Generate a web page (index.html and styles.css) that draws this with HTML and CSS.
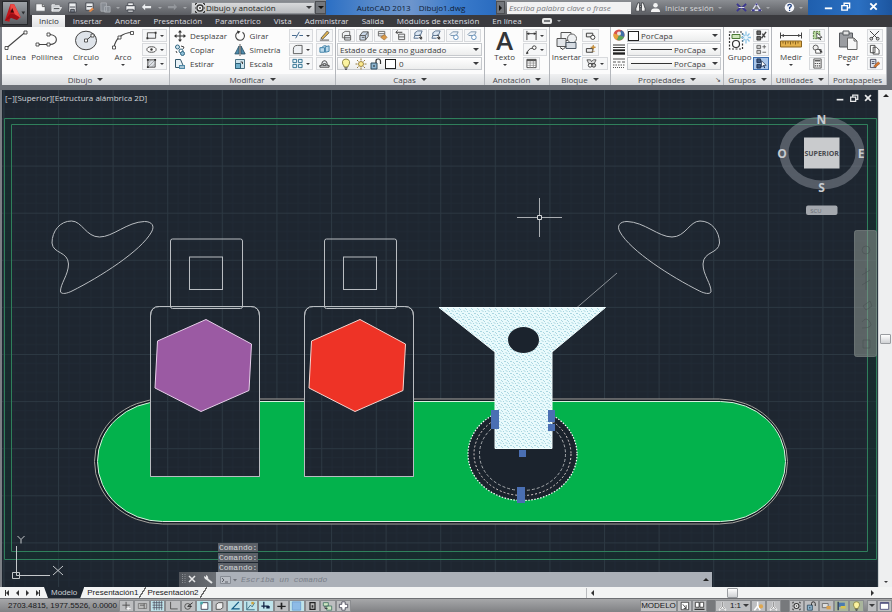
FILE: index.html
```html
<!DOCTYPE html>
<html lang="es">
<head>
<meta charset="utf-8">
<title>AutoCAD 2013 - Dibujo1.dwg</title>
<link rel="stylesheet" href="styles.css">
</head>
<body>
<svg class="defs" aria-hidden="true">
  <symbol id="new" viewBox="0 0 12 12"><path d="M1 2h7l3 3v5H1z" fill="#f6f7f8" stroke="#44474c" stroke-width=".6"/><path d="M8 2v3h3" fill="none" stroke="#555"/></symbol>
  <symbol id="open" viewBox="0 0 12 12"><path d="M1 10V3h3l1 1h4v2M1 10l2-4h8.500l-2.500 4z" fill="#c9ccd0" stroke="#f2f3f4" stroke-width=".9"/><path d="M3 7h6" stroke="#44474c"/></symbol>
  <symbol id="save" viewBox="0 0 12 12"><path d="M2 1h8v10H2z" fill="#eceef0" stroke="#3d4148"/><path d="M3 5.500h6M4 8h4v3H4z" stroke="#3d4148" fill="#7f8691"/></symbol>
  <symbol id="saveas" viewBox="0 0 12 12"><path d="M2 1h8v8H2z" fill="#eceef0" stroke="#3d4148"/><path d="M3 5h6" stroke="#3d4148"/><path d="M5 10l4-4 2 2-4 3z" fill="#e08a4a"/></symbol>
  <symbol id="plot" viewBox="0 0 12 12"><path d="M1 1h6v9H1zM5 5h6v6H5z" fill="#888d94" stroke="#a9adb2"/></symbol>
  <symbol id="print" viewBox="0 0 12 12"><path d="M3 1h6v3H3zM1 4h10v5H1zM3 8h6v3H3z" fill="#f0f1f2" stroke="#3d4148" stroke-width=".8"/></symbol>
  <symbol id="undo" viewBox="0 0 12 12"><path d="M4.500 2L1 5.500 4.500 9V6.700H11V4.300H4.500z" fill="#eceef0"/></symbol>
  <symbol id="redo" viewBox="0 0 12 12"><path d="M7.500 2L11 5.500 7.500 9V6.700H1V4.300h6.500z" fill="#94979c"/></symbol>
  <symbol id="gear" viewBox="0 0 12 12"><path d="M1.500 3V1.500H3M9 1.500h1.500V3M1.500 9v1.500H3M9 10.500h1.500V9M1 6h1M10 6h1" fill="none" stroke="#333"/><circle cx="6" cy="6" r="3" fill="#f4f4f4" stroke="#333" stroke-width="1.300"/><circle cx="6" cy="6" r="1" fill="#444"/></symbol>
  <symbol id="binoc" viewBox="0 0 12 12"><path d="M3 1h2v9H1V7zM7 1h2l2 6v3H7zM5 4h2v2H5z" fill="#f1f1f1" stroke="#33363b" stroke-width=".8"/></symbol>
  <symbol id="user" viewBox="0 0 12 12"><circle cx="6" cy="3.500" r="2.500" fill="#f3f3f3"/><path d="M1 11q0-4 3.500-4h3q3.500 0 3.500 4z" fill="#f3f3f3"/></symbol>
  <symbol id="exch" viewBox="0 0 12 12"><path d="M1 2l4 4-4 4M11 2L7 6l4 4" fill="none" stroke="#3b3790" stroke-width="2"/><path d="M3 6h6" stroke="#e8e8f5"/></symbol>
  <symbol id="a360" viewBox="0 0 12 12"><path d="M6 2L1.500 9h9z" fill="none" stroke="#dfe1f0" stroke-width="1.500"/><path d="M6 1.500v2M1 9h3M8 9h3" stroke="#3b3790" stroke-width="2"/></symbol>
  <symbol id="help" viewBox="0 0 12 12"><circle cx="6" cy="6" r="5.200" fill="#f5f6fa"/><path d="M4.200 4.500q0-2 1.900-2t1.900 1.700q0 1-1.900 2V7.500M6.100 8.500v1.300" fill="none" stroke="#23427e" stroke-width="1.400"/></symbol>
  <symbol id="min" viewBox="0 0 12 12"><path d="M2 8h8" stroke="currentColor" stroke-width="2"/></symbol>
  <symbol id="rest" viewBox="0 0 12 12"><path d="M2 5h6v5H2zM4.500 4.500V2.500h6v5H8.500" fill="none" stroke="currentColor" stroke-width="1.500"/></symbol>
  <symbol id="close" viewBox="0 0 12 12"><path d="M2.500 2.500l7 7M9.500 2.500l-7 7" stroke="currentColor" stroke-width="2"/></symbol>

  <symbol id="line" viewBox="0 0 24 20"><path d="M2.500 17.500l19-16" stroke="#444" stroke-width="1.100"/><path d="M1 16h3v3H1zM20 0.500h3v3h-3z" fill="#fff" stroke="#333" stroke-width=".8"/></symbol>
  <symbol id="pline" viewBox="0 0 24 20"><path d="M2 14h13c8 0 9-9 0-10" fill="none" stroke="#444" stroke-width="1.100"/><path d="M1 12.500h3v3H1zM12 12.500h3v3h-3zM12 2.500h3v3h-3z" fill="#fff" stroke="#333" stroke-width=".8"/></symbol>
  <symbol id="circle" viewBox="0 0 24 20"><ellipse cx="12" cy="10" rx="10.500" ry="9.300" fill="#dfe4ea" stroke="#444"/><path d="M12 10l6-5" stroke="#444"/><path d="M10.500 8.500h3v3h-3zM17 3.500h3v3h-3z" fill="#fff" stroke="#333" stroke-width=".8"/></symbol>
  <symbol id="arc" viewBox="0 0 24 20"><path d="M3 17C4 9 11 2 21 2" fill="none" stroke="#444" stroke-width="1.100"/><path d="M1.500 15.500h3v3h-3zM7 5.500h3v3H7zM19.500 1h3v3h-3z" fill="#fff" stroke="#333" stroke-width=".8"/></symbol>
  <symbol id="rect" viewBox="0 0 12 12"><path d="M1.500 3h9v6h-9z" fill="#eef0f3" stroke="#444"/><path d="M.5 8h2v2h-2zM9.500 2h2v2h-2z" fill="#333"/></symbol>
  <symbol id="ellipse" viewBox="0 0 12 12"><ellipse cx="6" cy="6" rx="5" ry="3" fill="#fff" stroke="#444"/><circle cx="6" cy="6" r="1.300" fill="#333"/></symbol>
  <symbol id="hatch" viewBox="0 0 12 12"><path d="M2 2h8v8H2z" fill="#dde1e6" stroke="#444"/><path d="M2 6l4-4M2 10l8-8M6 10l4-4" stroke="#888" stroke-width=".7"/><path d="M1 1h2v2H1zM9 1h2v2H9zM1 9h2v2H1z" fill="#333"/></symbol>
  <symbol id="move" viewBox="0 0 12 12"><path d="M6 1v10M1 6h10" stroke="#333"/><path d="M6 0l2 2.500H4zM6 12l2-2.500H4zM0 6l2.500-2v4zM12 6L9.500 4v4z" fill="#333"/></symbol>
  <symbol id="copy" viewBox="0 0 12 12"><circle cx="3.500" cy="3" r="2" fill="#cfe4ef" stroke="#2f6580"/><path d="M7 2l3 1-1 2M2 7l1 2" stroke="#444" fill="none"/><circle cx="7" cy="7" r="2" fill="#fff" stroke="#2f6580"/><circle cx="8.500" cy="9.500" r="2" fill="#8fc0d8" stroke="#2f6580"/></symbol>
  <symbol id="stretch" viewBox="0 0 12 12"><path d="M1.500 1.500h5L10 9.500H1.500z" fill="#e8f2f7" stroke="#34586b"/><path d="M5 7h6v4H5z" fill="#4f8aa8"/><path d="M6 9h4" stroke="#fff"/></symbol>
  <symbol id="rotate" viewBox="0 0 12 12"><path d="M8.500 2.200A4.400 4.400 0 1 1 4 2" fill="none" stroke="#444" stroke-width="1.100"/><path d="M3 .5l3.500 1L4 4z" fill="#333"/></symbol>
  <symbol id="mirror" viewBox="0 0 12 12"><path d="M5 2v8H.8z" fill="#4e8cad" stroke="#27475a" stroke-width=".7"/><path d="M7 2v8h4.200z" fill="#4e8cad" stroke="#27475a" stroke-width=".8"/><path d="M6 0v12" stroke="#333" stroke-width=".8"/></symbol>
  <symbol id="scale" viewBox="0 0 12 12"><path d="M1.500 1.500h9v9h-9z" fill="#cfe5ee" stroke="#4b7385"/><path d="M1.500 5.500h5v5h-5z" fill="#71b0cb" stroke="#2e6077"/><path d="M6.500 4h2v2" fill="none" stroke="#444"/></symbol>
  <symbol id="trim" viewBox="0 0 12 12"><path d="M0 6h5M8 6h4M4 9l4-7" stroke="#345c84"/></symbol>
  <symbol id="fillet" viewBox="0 0 12 12"><path d="M1.500 10.500V6q0-4.500 4.500-4.500h5v9z" fill="#eef1f4" stroke="#555"/></symbol>
  <symbol id="array" viewBox="0 0 12 12"><path d="M1 1.500h4v3.500H1zM7 1.500h4v3.500H7zM1 7h4v3.500H1zM7 7h4v3.500H7z" fill="#e6f1f7" stroke="#2e708f"/></symbol>
  <symbol id="erase" viewBox="0 0 12 12"><path d="M2 9l7-8 2 2-7 7z" fill="#e0b452" stroke="#444" stroke-width=".8"/><path d="M1 11h10" stroke="#444"/></symbol>
  <symbol id="explode" viewBox="0 0 12 12"><path d="M1 4h5v5H1zM7 3l4-1v6l-4 1zM3 4l2-2h3" fill="#b8d8ea" stroke="#3a7ea5"/></symbol>
  <symbol id="offset" viewBox="0 0 12 12"><path d="M1 10V8h2q0-5 3-5t3 5h2v2zM4 8q0-2 2-2t2 2z" fill="#e8ecf0" stroke="#333"/></symbol>
  <symbol id="layer" viewBox="0 0 12 12"><path d="M1.500 3.500l3-2h5v5l-2 2h-6z" fill="#eef0f2" stroke="#666"/><path d="M4 6h6.500v5H4zM4 8.500h6" fill="#dfe3e8" stroke="#555"/></symbol>
  <symbol id="layer2" viewBox="0 0 12 12"><path d="M1 6l3-4h6v5l-3 4H1z" fill="#cad8e8" stroke="#555"/><path d="M1 6h6v5M7 6l3-4M3 8h3" fill="none" stroke="#555"/></symbol>
  <symbol id="layer3" viewBox="0 0 12 12"><path d="M1.500 1.500h7v5h-7zM1.500 4h7" fill="#f1f2f3" stroke="#666"/><path d="M4 8l4-3 3 3-3 3z" fill="#d99a4a" stroke="#8b5a22" stroke-width=".6"/></symbol>
  <symbol id="layer4" viewBox="0 0 12 12"><path d="M4 4.500h6.500v6H4zM4 7.500h6" fill="#eef0f2" stroke="#555"/><path d="M1 2.500h7M1 2.500l2-2M1 2.500l2 2" fill="none" stroke="#333"/></symbol>
  <symbol id="layer5" viewBox="0 0 12 12"><path d="M2 3l3-2h5L8 6H2zM2 6l-1 3h5" fill="#dce7f3" stroke="#56708c"/><path d="M6 8h4l-1 3z" fill="#333"/><path d="M7 5l3 4" stroke="#333"/></symbol>
  <symbol id="layer6" viewBox="0 0 12 12"><path d="M1 5l3-3h6L8 6H2z" fill="#eef3f8" stroke="#7690aa"/><circle cx="7.500" cy="8" r="2.500" fill="#fff" stroke="#5a8ab8"/></symbol>
  <symbol id="bulb" viewBox="0 0 12 12"><path d="M4 8Q2 6 2.500 3.500T6 1t3.500 2.500T8 8v1H4z" fill="#fbf3a0" stroke="#776f2c" stroke-width=".8"/><path d="M4.500 10h3M5 11.300h2" stroke="#444"/></symbol>
  <symbol id="sun" viewBox="0 0 12 12"><circle cx="6" cy="6" r="2.500" fill="#fcea8e" stroke="#8a6f2a" stroke-width=".8"/><path d="M6 .5v2M6 9.500v2M.5 6h2M9.500 6h2M2 2l1.500 1.500M8.500 8.500L10 10M10 2L8.500 3.500M3.500 8.500L2 10" stroke="#8a6f2a" stroke-width=".9"/></symbol>
  <symbol id="lock" viewBox="0 0 12 12"><path d="M1 5h6v6H1z" fill="#8db4cf" stroke="#2d4a5f"/><path d="M6 5V3q0-2 2.200-2T10.500 3v3" fill="none" stroke="#333" stroke-width="1.200"/><path d="M4 7v2" stroke="#222"/></symbol>
  <symbol id="dim" viewBox="0 0 12 12"><path d="M1 1v10M11 1v10M1 4h10" stroke="#333"/><path d="M1 4l2.500-1.500v3zM11 4L8.500 2.500v3z" fill="#333"/></symbol>
  <symbol id="leader" viewBox="0 0 12 12"><path d="M1 11q1-6 6-6.500" fill="none" stroke="#333"/><circle cx="9" cy="4" r="2" fill="#fff" stroke="#333"/><path d="M0 11l3-1-2-2z" fill="#333"/></symbol>
  <symbol id="table" viewBox="0 0 12 12"><path d="M1 1.500h10v9H1z" fill="#fff" stroke="#444"/><path d="M1 2.500h10" stroke="#555" stroke-width="2"/><path d="M1 5.500h10M1 8h10M4.500 3v8M8 3v8" stroke="#888" stroke-width=".8"/></symbol>
  <symbol id="insert" viewBox="0 0 24 20"><path d="M6 2h10v8H6z" fill="#f4f5f6" stroke="#555"/><path d="M2 8h9v8H2z" fill="#e2e5e9" stroke="#555"/><circle cx="17" cy="8" r="4.500" fill="#eef0f2" stroke="#666"/><path d="M11 12h10v6H11z" fill="#d5dbe2" stroke="#4d5966"/><path d="M5 17l3 2 3-3" fill="none" stroke="#333"/></symbol>
  <symbol id="block" viewBox="0 0 12 12"><path d="M1.500 7.500V3.500h7v4z" fill="#eee" stroke="#333"/><circle cx="8.500" cy="8" r="2.300" fill="#fff" stroke="#333"/></symbol>
  <symbol id="block2" viewBox="0 0 12 12"><path d="M1.500 9V5h7v4z" fill="#eee" stroke="#333"/><path d="M7 8h4M9 1l.7 2 2 .5-2 .6L9 6l-.8-1.900-2-.6 2-.5z" fill="#d8932d" stroke="#a8701c" stroke-width=".5"/></symbol>
  <symbol id="attr" viewBox="0 0 12 12"><path d="M1 2h4l1 2 2-2h3L9 6H3z" fill="#ddd" stroke="#333" stroke-width=".8"/><circle cx="4.500" cy="8" r="2" fill="#fff" stroke="#333"/><circle cx="8.500" cy="8" r="2" fill="#ccc" stroke="#333"/></symbol>
  <symbol id="color" viewBox="0 0 12 12"><circle cx="6" cy="6" r="5.500" fill="#d9534a"/><path d="M6 6L.8 4.500A5.500 5.500 0 0 0 4 11.100z" fill="#e6a23c"/><path d="M6 6l-2 5.100A5.500 5.500 0 0 0 11.100 8z" fill="#58a55c"/><path d="M6 6l5.100 2A5.500 5.500 0 0 0 8 .9z" fill="#3f6ea8"/><circle cx="6" cy="4.500" r="2" fill="#e9e3df"/></symbol>
  <symbol id="weight" viewBox="0 0 12 12"><path d="M0 2h12M0 4.500h12" stroke="#333"/><path d="M0 7.200h12" stroke="#222" stroke-width="1.800"/><path d="M0 10.500h12" stroke="#222" stroke-width="2.400"/></symbol>
  <symbol id="ltype" viewBox="0 0 12 12"><path d="M0 2h12" stroke="#555"/><path d="M0 5h12" stroke="#555" stroke-dasharray="3 1.500"/><path d="M0 8h12" stroke="#555" stroke-dasharray="1.500 1"/><path d="M0 10.500h12" stroke="#555" stroke-dasharray="1 1"/></symbol>
  <symbol id="group" viewBox="0 0 24 20"><path d="M1.500 1.500h13v17h-13z" fill="none" stroke="#333" stroke-dasharray="2 1.500" stroke-width="1.200"/><path d="M4 4h8v4H4z" fill="#cfe6bb" stroke="#4a7a35"/><circle cx="8" cy="13.500" r="3.500" fill="#fff" stroke="#333" stroke-width="1.200"/><path d="M18 1v12M13 7h10M14.500 3l7 8M21.500 3l-7 8" stroke="#8cc4e6" stroke-width="1.300"/><circle cx="18" cy="7" r="2" fill="#e9f6fd"/></symbol>
  <symbol id="g1" viewBox="0 0 12 12"><path d="M1 1h4v4H1zM1 7h4v4H1z" fill="#666" stroke="#333"/><path d="M6 9l5-7M7 4l3 4" stroke="#444" stroke-width="1.500"/></symbol>
  <symbol id="g2" viewBox="0 0 12 12"><path d="M1 1.500h4v3.500H1zM1 7h4v3.500H1z" fill="#ccc" stroke="#666"/><path d="M7 3h4M9 1v4M7 9h4" stroke="#666"/></symbol>
  <symbol id="g3" viewBox="0 0 12 12"><path d="M1 1h4v4H1zM1 7h4v4H1z" fill="#3e5a83" stroke="#1c2f4e"/><path d="M6 3l5 5H8.500l1 3-1.500-3L6 10z" fill="#fff" stroke="#1c2f4e" stroke-width=".8"/></symbol>
  <symbol id="measure" viewBox="0 0 24 20"><path d="M1.500 2v6M22.500 2v6M2 5h20" stroke="#444"/><path d="M2 5l3-1.500v3zM22 5l-3-1.500v3z" fill="#444"/><path d="M1.500 10.500h21v6h-21z" fill="#e3b04b" stroke="#8b6420"/><path d="M4 11v2M6.500 11v3M9 11v2M11.500 11v3M14 11v2M16.500 11v3M19 11v2" stroke="#6d4c14" stroke-width=".8"/></symbol>
  <symbol id="qsel" viewBox="0 0 12 12"><path d="M1.500 1.500h7v8h-7z" fill="#b9d9a0" stroke="#4b7436" stroke-dasharray="2 1"/><path d="M5 3l6 5H8.500l1 3-2-3-2 1z" fill="#fff" stroke="#333" stroke-width=".8"/></symbol>
  <symbol id="selall" viewBox="0 0 12 12"><circle cx="4" cy="4" r="2.800" fill="#eee" stroke="#555"/><path d="M4 6h6v4H4z" fill="#fff" stroke="#555"/><path d="M7 5l5 4H9.500l.5 2z" fill="#333"/></symbol>
  <symbol id="calc" viewBox="0 0 12 12"><path d="M2 1h8v10H2z" fill="#f2f2f2" stroke="#555"/><path d="M3 3h6" stroke="#555" stroke-width="1.500"/><path d="M3 6h6M3 8.500h6" stroke="#555" stroke-dasharray="1.500 .8" stroke-width="1.300"/></symbol>
  <symbol id="paste" viewBox="0 0 24 20"><path d="M3.500 2.500h13v14h-13z" fill="#9b9da1" stroke="#55585d"/><path d="M7 .5h6v4H7z" fill="#e2e2e2" stroke="#55585d"/><path d="M11.500 7.500H18l3 3v8.500h-9.500z" fill="#f7f7f7" stroke="#666"/><path d="M18 7.500v3h3" fill="none" stroke="#666"/></symbol>
  <symbol id="cut" viewBox="0 0 12 12"><path d="M1 1l8 8M11 1L3 9" stroke="#333"/><circle cx="2.500" cy="9.500" r="1.500" fill="none" stroke="#333"/><circle cx="9.500" cy="9.500" r="1.500" fill="none" stroke="#333"/></symbol>
  <symbol id="copyc" viewBox="0 0 12 12"><path d="M1.500 1.500h5v8h-5zM4.500 3.500H8l3 3v4.500H4.500z" fill="#fff" stroke="#444"/></symbol>
  <symbol id="match" viewBox="0 0 12 12"><path d="M1.500 1.500h6v9h-6zM3 4h3M3 6h3" fill="#dce4ee" stroke="#445"/><path d="M5 9l5-5 2 2-5 4z" fill="#d9772f" stroke="#80451b" stroke-width=".5"/></symbol>

  <symbol id="s1" viewBox="0 0 12 12"><path d="M5.500 1v9M1 5h9" stroke="#444"/><path d="M8 7v4M6 9h5" stroke="#fff"/></symbol>
  <symbol id="s2" viewBox="0 0 12 12"><path d="M1 3h10v6H1z" fill="#bbb" stroke="#777"/><path d="M3 5h5M8 3v6" stroke="#555"/></symbol>
  <symbol id="s3" viewBox="0 0 12 12"><path d="M0 2h12M0 5h12M0 8h12M2 0v11M5 0v11M8 0v11M11 0v11" stroke="#445" stroke-width=".8"/></symbol>
  <symbol id="s4" viewBox="0 0 12 12"><path d="M2.500 1v8.500H11" fill="none" stroke="#444"/></symbol>
  <symbol id="s5" viewBox="0 0 12 12"><circle cx="5" cy="6.500" r="3.500" fill="none" stroke="#444"/><path d="M5 6.500L11 2M5 6.500h5" stroke="#222"/></symbol>
  <symbol id="s6" viewBox="0 0 12 12"><path d="M2 2h8v8H2z" fill="#fff" stroke="#334"/><path d="M1 1h3v3H1z" fill="#4aa"/></symbol>
  <symbol id="s7" viewBox="0 0 12 12"><path d="M2 10V4l3-2h5v6l-3 2z" fill="#eee" stroke="#444"/></symbol>
  <symbol id="s8" viewBox="0 0 12 12"><path d="M10 1L2 9.500h9" fill="none" stroke="#125a84" stroke-width="1.500"/></symbol>
  <symbol id="s9" viewBox="0 0 12 12"><path d="M1.500 1v9.500H11M2 10l4-5 2 2 3-5" fill="none" stroke="#2e6077"/><path d="M7 1h3v3H7z" fill="#cda23a"/></symbol>
  <symbol id="s10" viewBox="0 0 12 12"><path d="M4 1v8M1 6h9" stroke="#124" stroke-width="1.500"/><path d="M7 6h4v3H7z" fill="#124"/></symbol>
  <symbol id="s11" viewBox="0 0 12 12"><path d="M1 6.500h10" stroke="#222" stroke-width="1.500"/><path d="M6 2v8" stroke="#222" stroke-width="2"/></symbol>
  <symbol id="s12" viewBox="0 0 12 12"><path d="M1 1h10v10H1z" fill="#8dbbe6" stroke="#6d9fd0"/></symbol>
  <symbol id="s13" viewBox="0 0 12 12"><path d="M3 2h6v8H3z" fill="#bbb" stroke="#222" stroke-width="1.500"/><path d="M5 5h2v3H5z" fill="#333"/></symbol>
  <symbol id="s14" viewBox="0 0 12 12"><path d="M1 2h6v4H1zM5 6h6v5H5z" fill="#cfe6c2" stroke="#476"/><path d="M3 6v3h3" fill="none" stroke="#333"/></symbol>
  <symbol id="s15" viewBox="0 0 12 12"><path d="M4 1h4v3h3v4H8v3H4V8H1V4h3z" fill="#fff" stroke="#445"/></symbol>
  <symbol id="model" viewBox="0 0 12 12"><path d="M2 1.500h9v9H2z" fill="#fff" stroke="#333"/><path d="M4 4l4 5M8 5v4H5" stroke="#333" fill="none"/></symbol>
  <symbol id="views" viewBox="0 0 12 12"><path d="M1 1.500h4.500v6H1zM6.500 1.500H11v6H6.500z" fill="#fff" stroke="#333"/><path d="M0 10h12" stroke="#333" stroke-width="1.500"/></symbol>
  <symbol id="anno" viewBox="0 0 12 12"><path d="M6 1v5M6 6l-4 5M6 6l4 5M3.500 8h5" stroke="#fff" stroke-width="1.800" fill="none"/><path d="M6 1v5l-3 4M6 6l3 4" stroke="#555" stroke-width=".7" fill="none"/></symbol>
  <symbol id="annov" viewBox="0 0 12 12"><path d="M5 1v5M5 6l-4 5M5 6l3 5" stroke="#fff" stroke-width="1.800" fill="none"/><circle cx="9" cy="6.500" r="2.500" fill="#e0a850"/></symbol>
  <symbol id="hw" viewBox="0 0 12 12"><path d="M1 3h7v5H1z" fill="#ddd" stroke="#666"/><path d="M6 6h5v4H6z" fill="#d9a04e"/></symbol>
  <symbol id="iso" viewBox="0 0 12 12"><path d="M2 1v10" stroke="#235" stroke-width="1.500"/><path d="M3 2h7v5H3z" fill="#4b7bb0"/><path d="M5 6h6v3H5z" fill="#d8c34c"/></symbol>
  <symbol id="clean" viewBox="0 0 12 12"><path d="M1 2h10v8H1z" fill="#fff" stroke="#447"/><path d="M1 2.500h10" stroke="#447" stroke-width="1.500"/></symbol>
</svg>

<div class="app">
  <header class="top">
    <button class="appbtn" aria-label="Menú de la aplicación">
      <svg viewBox="0 0 26 23"><path d="M2 20L8 2h4l7 14-4 3-3-6-4 2-1 6z" fill="#c3161c"/><path d="M8 2h4l7 14-4 2-3-7-4-3z" fill="#ee4b45"/><path d="M2 20l6-8 5 1 5 3-3 3-6-2z" fill="#9d0e15"/><path d="M10 6l2 5H8z" fill="#3c0608"/><path d="M20 10h4l-2 3z" fill="#2c2e31"/></svg>
    </button>
    <div class="titlebar">
      <div class="qat">
        <button aria-label="Nuevo"><svg><use href="#new"/></svg></button>
        <button aria-label="Abrir"><svg><use href="#open"/></svg></button>
        <button aria-label="Guardar"><svg><use href="#save"/></svg></button>
        <button aria-label="Guardar como"><svg><use href="#saveas"/></svg></button>
        <button aria-label="Publicar"><svg><use href="#plot"/></svg></button>
        <i class="dot"></i>
        <button aria-label="Trazar"><svg><use href="#print"/></svg></button>
        <button aria-label="Deshacer"><svg><use href="#undo"/></svg></button>
        <i class="dot"></i>
        <button aria-label="Rehacer"><svg><use href="#redo"/></svg></button>
        <i class="dot"></i>
      </div>
      <div class="combo workspace"><svg class="ico"><use href="#gear"/></svg>
        <select aria-label="Espacio de trabajo"><option>Dibujo y anotación</option></select><i class="caret"></i></div>
      <button class="more" aria-label="Personalizar"><i class="caret"></i></button>
      <div class="doc"><span>AutoCAD 2013</span><span>Dibujo1.dwg</span></div>
      <button class="more side" aria-label="Mostrar búsqueda"><i class="right"></i></button>
      <input class="search" aria-label="Buscar" placeholder="Escriba palabra clave o frase">
      <div class="info">
        <button aria-label="Buscar"><svg><use href="#binoc"/></svg></button>
        <button class="signin"><svg><use href="#user"/></svg><span>Iniciar sesión</span></button>
        <i class="dot"></i>
        <span class="grow"></span>
        <button aria-label="Exchange"><svg><use href="#exch"/></svg></button>
        <button aria-label="Autodesk 360"><svg><use href="#a360"/></svg></button>
        <i class="dot"></i>
        <span class="grow"></span>
        <button aria-label="Ayuda"><svg><use href="#help"/></svg></button>
        <i class="dot"></i>
      </div>
      <div class="winctl">
        <button aria-label="Minimizar"><svg><use href="#min"/></svg></button>
        <button aria-label="Restaurar"><svg><use href="#rest"/></svg></button>
        <button aria-label="Cerrar"><svg><use href="#close"/></svg></button>
      </div>
    </div>
    <nav class="tabs">
      <a href="#" class="on">Inicio</a><a href="#">Insertar</a><a href="#">Anotar</a><a href="#">Presentación</a><a href="#">Paramétrico</a><a href="#">Vista</a><a href="#">Administrar</a><a href="#">Salida</a><a href="#">Módulos de extensión</a><a href="#">En línea</a>
      <button class="mini" aria-label="Minimizar cinta"><i class="pillicon"></i><i class="dot"></i></button>
    </nav>
  </header>

  <section class="ribbon" aria-label="Cinta de opciones">
    <div class="panel">
      <div class="body draw">
        <button class="big"><svg><use href="#line"/></svg>Línea</button>
        <button class="big"><svg><use href="#pline"/></svg>Polilínea</button>
        <button class="big"><svg><use href="#circle"/></svg>Círculo<i class="caret s"></i></button>
        <button class="big"><svg><use href="#arc"/></svg>Arco<i class="caret s"></i></button>
        <div class="stack">
          <button class="split" aria-label="Rectángulo"><svg><use href="#rect"/></svg><i class="caret s"></i></button>
          <button class="split" aria-label="Elipse"><svg><use href="#ellipse"/></svg><i class="caret s"></i></button>
          <button class="split" aria-label="Sombreado"><svg><use href="#hatch"/></svg><i class="caret s"></i></button>
        </div>
      </div>
      <button class="foot">Dibujo<i class="caret"></i></button>
    </div>
    <div class="panel">
      <div class="body modify">
        <div class="stack">
          <button class="row"><svg><use href="#move"/></svg>Desplazar</button>
          <button class="row"><svg><use href="#copy"/></svg>Copiar</button>
          <button class="row"><svg><use href="#stretch"/></svg>Estirar</button>
        </div>
        <div class="stack">
          <button class="row"><svg><use href="#rotate"/></svg>Girar</button>
          <button class="row"><svg><use href="#mirror"/></svg>Simetría</button>
          <button class="row"><svg><use href="#scale"/></svg>Escala</button>
        </div>
        <div class="stack">
          <button class="split" aria-label="Recortar"><svg><use href="#trim"/></svg><i class="caret s"></i></button>
          <button class="split" aria-label="Empalme"><svg><use href="#fillet"/></svg><i class="caret s"></i></button>
          <button class="split" aria-label="Matriz"><svg><use href="#array"/></svg><i class="caret s"></i></button>
        </div>
        <div class="stack">
          <button class="split" aria-label="Borrar"><svg><use href="#erase"/></svg></button>
          <button class="split" aria-label="Descomponer"><svg><use href="#explode"/></svg></button>
          <button class="split" aria-label="Desfase"><svg><use href="#offset"/></svg></button>
        </div>
      </div>
      <button class="foot">Modificar<i class="caret"></i></button>
    </div>
    <div class="panel">
      <div class="body layers">
        <div class="iconrow">
          <button class="split" aria-label="Propiedades de capas"><svg><use href="#layer"/></svg></button>
          <button class="split" aria-label="Estados de capa"><svg><use href="#layer2"/></svg></button>
          <button class="split" aria-label="Igualar capa"><svg><use href="#layer3"/></svg></button>
          <button class="split" aria-label="Capa previa"><svg><use href="#layer4"/></svg></button>
          <button class="split" aria-label="Aislar"><svg><use href="#layer5"/></svg></button>
          <button class="split" aria-label="Desaislar"><svg><use href="#layer5"/></svg></button>
          <button class="split" aria-label="Inutilizar"><svg><use href="#layer6"/></svg></button>
          <button class="split" aria-label="Desactivar"><svg><use href="#layer6"/></svg></button>
        </div>
        <div class="combo"><select aria-label="Estado de capa"><option>Estado de capa no guardado</option></select><i class="caret"></i></div>
        <div class="combo lay"><svg class="ico"><use href="#bulb"/></svg><svg class="ico"><use href="#sun"/></svg><svg class="ico"><use href="#lock"/></svg><i class="swatch"></i><select aria-label="Capa"><option>0</option></select><i class="caret"></i></div>
      </div>
      <button class="foot">Capas<i class="caret"></i></button>
    </div>
    <div class="panel">
      <div class="body annot">
        <button class="big"><b class="glyph">A</b>Texto<i class="caret s"></i></button>
        <div class="stack">
          <button class="split" aria-label="Cota"><svg><use href="#dim"/></svg><i class="caret s"></i></button>
          <button class="split" aria-label="Directriz"><svg><use href="#leader"/></svg><i class="caret s"></i></button>
          <button class="split one" aria-label="Tabla"><svg><use href="#table"/></svg></button>
        </div>
      </div>
      <button class="foot">Anotación<i class="caret"></i></button>
    </div>
    <div class="panel">
      <div class="body block">
        <button class="big"><svg><use href="#insert"/></svg>Insertar</button>
        <div class="stack">
          <button class="split one" aria-label="Crear bloque"><svg><use href="#block"/></svg></button>
          <button class="split one" aria-label="Editar bloque"><svg><use href="#block2"/></svg></button>
          <button class="split" aria-label="Atributos"><svg><use href="#attr"/></svg><i class="caret s"></i></button>
        </div>
      </div>
      <button class="foot">Bloque<i class="caret"></i></button>
    </div>
    <div class="panel">
      <div class="body props">
        <svg class="ico"><use href="#color"/></svg>
        <div class="combo"><i class="swatch"></i><select aria-label="Color"><option>PorCapa</option></select><i class="caret"></i></div>
        <svg class="ico"><use href="#weight"/></svg>
        <div class="combo"><i class="rule"></i><select aria-label="Grosor de línea"><option>PorCapa</option></select><i class="caret"></i></div>
        <svg class="ico"><use href="#ltype"/></svg>
        <div class="combo"><i class="rule"></i><select aria-label="Tipo de línea"><option>PorCapa</option></select><i class="caret"></i></div>
      </div>
      <button class="foot">Propiedades<i class="caret"></i><i class="launch">↘</i></button>
    </div>
    <div class="panel">
      <div class="body group">
        <button class="big"><svg><use href="#group"/></svg>Grupo</button>
        <div class="stack">
          <button class="split" aria-label="Desagrupar"><svg><use href="#g1"/></svg></button>
          <button class="split" aria-label="Editar grupo"><svg><use href="#g2"/></svg></button>
          <button class="split sel" aria-label="Selección de grupo"><svg><use href="#g3"/></svg></button>
        </div>
      </div>
      <button class="foot">Grupos<i class="caret"></i></button>
    </div>
    <div class="panel">
      <div class="body util">
        <button class="big"><svg><use href="#measure"/></svg>Medir<i class="caret s"></i></button>
        <div class="stack">
          <button class="split" aria-label="Selección rápida"><svg><use href="#qsel"/></svg></button>
          <button class="split" aria-label="Seleccionar todo"><svg><use href="#selall"/></svg></button>
          <button class="split" aria-label="Calculadora"><svg><use href="#calc"/></svg></button>
        </div>
      </div>
      <button class="foot">Utilidades<i class="caret"></i></button>
    </div>
    <div class="panel">
      <div class="body util">
        <button class="big"><svg><use href="#paste"/></svg>Pegar<i class="caret s"></i></button>
        <div class="stack">
          <button class="split" aria-label="Cortar"><svg><use href="#cut"/></svg></button>
          <button class="split" aria-label="Copiar"><svg><use href="#copyc"/></svg></button>
          <button class="split" aria-label="Igualar propiedades"><svg><use href="#match"/></svg></button>
        </div>
      </div>
      <button class="foot">Portapapeles</button>
    </div>
  </section>

  <main class="work">
    <div class="canvas">
      <svg class="drawing" viewBox="2 90 876 497" role="img" aria-label="Dibujo1">
        <defs>
          <pattern id="grid" x="58" y="118.500" width="54.600" height="47.100" patternUnits="userSpaceOnUse">
            <path d="M10.900 0v47.100M21.800 0v47.100M32.800 0v47.100M43.700 0v47.100M0 9.400h54.600M0 18.800h54.600M0 28.300h54.600M0 37.700h54.600" stroke="#202a35" stroke-width=".8"/>
            <path d="M.5 0v47.100M0 .5h54.600" stroke="#2c3842"/>
          </pattern>
          <pattern id="dots" width="6" height="6" patternUnits="userSpaceOnUse">
            <path d="M0 0h6v6H0z" fill="#e9fafc"/>
            <path d="M.5 1l1 1M3.500 2.500l1 1M2 4.500l1 1M5 5.500l.8.500" stroke="#6cb3c6" stroke-width="1"/>
          </pattern>
          <path id="blob" d="M52 243C52 231 60 221 71.500 221C82 221 86 237 99.500 237C113 237 127 222 144.500 221.500C152 221.500 155 226 151.500 232C141 251 100 277 72 291C67 293.500 62 294.500 60.500 292C60 284 68.500 275 68.500 264C68 251 53 254 52 243z"/>
          <g id="bottle">
            <path d="M150.500 476.500V316q0-9.500 9-9.500h91q9 0 9 9.500v160.500z" fill="#1e2630"/>
            <path d="M150.500 476.500V316q0-9.500 9-9.500h91q9 0 9 9.500v160.500z" fill="url(#grid)"/>
            <rect x="170.500" y="239" width="72" height="69.500" rx="2"/>
            <rect x="189.500" y="257" width="33" height="32.500"/>
          </g>
        </defs>
        <rect x="2" y="90" width="876" height="497" fill="#1e2630"/>
        <rect x="2" y="90" width="876" height="497" fill="url(#grid)"/>
        <path d="M4.500 118.500h872v441h-872zM11.500 124.500v427h856v-427z" fill="#12302c" fill-opacity=".5" stroke="#2f7f5b"/>
        <rect x="94.500" y="399" width="693" height="125" rx="68" ry="62.500" fill="#151d25" stroke="#a8a49f"/>
        <rect x="97.500" y="401.500" width="688" height="120" rx="65" ry="60" fill="#03b24c" stroke="#d9f0df"/>
        <g fill="none" stroke="#b9bdc1">
          <use href="#blob"/>
          <use href="#blob" transform="matrix(-1 0 0 1 771.500 0)"/>
          <use href="#bottle"/>
          <use href="#bottle" x="154"/>
          <path d="M206 319.500l45.500 24.500-2.500 46.500-48 21-46-23.500 2.500-47z" fill="#9b5aa3" stroke="#e7cfea"/>
          <path d="M360 319.500l45.500 24.500-2.500 46.500-48 21-46-23.500 2.500-47z" fill="#ee3326" stroke="#f7d5cf"/>
          <path d="M617 273l-40 34.500" stroke="#8b9096"/>
        </g>
        <ellipse cx="522.500" cy="454" rx="54.500" ry="46.500" fill="#1b232d" stroke="#fff" stroke-width="1.200" stroke-dasharray="1.500 1.500"/>
        <ellipse cx="522.500" cy="454" rx="48.500" ry="41.500" fill="none" stroke="#ddd2d0" stroke-dasharray="2 2"/>
        <ellipse cx="522.500" cy="454" rx="43" ry="36.500" fill="none" stroke="#c8cacc" stroke-width=".8" stroke-dasharray="3 2"/>
        <path d="M439 307.500h166.500L552 352v96.500h-57V352z" fill="url(#dots)" stroke="#f2feff"/>
        <ellipse cx="523.500" cy="340" rx="15.500" ry="13" fill="#1b232d"/>
        <g fill="#4a6fb3"><path d="M491 410h8v19h-8zM548 410h7v12h-7zM548 424h7v7h-7zM519 450h7v7h-7zM517 487h8v16h-8z"/></g>
        <path d="M517 217.500h20m5 0h20M539.500 198v17m0 5v17" stroke="#a9adb1"/><path d="M537.500 215.500h4v4h-4z" fill="none" stroke="#d5d7d9"/>
        <g fill="none" stroke="#c4c8cb"><path d="M16.500 546v29.500H50M12.500 572.500h7v6h-7z"/><path d="M53 566l10 9M63 566l-10 9M17.500 536l3.500 3.500 3.500-3.500M21 539.500v4"/></g>
        <ellipse cx="822" cy="153" rx="38" ry="32" fill="none" stroke="#8b929b" stroke-opacity=".5" stroke-width="9"/>
        <g class="compass"><text x="821.500" y="123.500">N</text><text x="782" y="157.500">O</text><text x="861" y="157.500">E</text><text x="821.500" y="191.500">S</text></g>
        <rect x="804" y="137.500" width="35.500" height="31" fill="#c9cbcd"/>
        <text class="face" x="821.700" y="155.500">SUPERIOR</text>
        <rect x="806" y="205.500" width="31.500" height="9.500" rx="2" fill="#a4a8ae"/>
        <text class="wcs" x="816" y="212.500">SCU</text>
        <rect x="854.500" y="230.500" width="22" height="126" rx="2" fill="#8e9791" fill-opacity=".55" stroke="#7c8583" stroke-opacity=".7"/>
        <g fill="none" stroke="#46504f" stroke-opacity=".5"><circle cx="866" cy="250" r="4"/><path d="M862 275l8-5M862 285l8-5M866 268v22M863 306l7-5 2 5-6 4zM862 322q4-6 8 0t-8 6M863 340h7v8h-7z"/></g>
      </svg>
      <div class="vplabel">[−][Superior][Estructura alámbrica 2D]</div>
      <div class="docctl">
        <button aria-label="Minimizar dibujo"><svg><use href="#min"/></svg></button>
        <button aria-label="Restaurar dibujo"><svg><use href="#rest"/></svg></button>
        <button aria-label="Cerrar dibujo"><svg><use href="#close"/></svg></button>
      </div>
      <div class="cmd">
        <div class="hist"><span>Comando:</span><span>Comando:</span><span>Comando:</span></div>
        <div class="cmdline">
          <div class="grip"><svg viewBox="0 0 37 14"><path d="M3.500 2v10M6 2v10" stroke="#8b8f94" stroke-dasharray="1 1"/><path d="M10 4l6 6M16 4l-6 6" stroke="#e6e7e8" stroke-width="1.500"/><path d="M28 7l5 4" stroke="#e6e7e8" stroke-width="2"/><path d="M25 4q0 4 4 4 1-4-2-5v2z" fill="#e6e7e8"/></svg></div>
          <label class="prompt" for="cmd"><svg viewBox="0 0 18 10"><path d="M.5 1.500h10v7H.5z" fill="#b9bdc4" stroke="#878c94"/><path d="M2 3l2 2-2 2M5 7h3" fill="none" stroke="#5d6169"/><path d="M13 4h4l-2 2.500z" fill="#6c7078"/></svg></label>
          <input id="cmd" placeholder="Escriba un comando" aria-label="Línea de comandos">
          <i class="up"></i>
        </div>
      </div>
    </div>
    <div class="vscroll" aria-hidden="true"><i class="up"></i><i class="thumb"></i><i class="caret s"></i></div>
  </main>

  <div class="layouts">
    <div class="pager"><button aria-label="Primera"><i class="left bar"></i></button><button aria-label="Anterior"><i class="left"></i></button><button aria-label="Siguiente"><i class="right"></i></button><button aria-label="Última"><i class="right bar"></i></button></div>
    <a href="#" class="on">Modelo</a><a href="#">Presentación1</a><i class="slash"></i><a href="#">Presentación2</a><i class="slash"></i>
    <div class="hscroll" aria-hidden="true"><i class="left"></i><i class="thumb"></i><i class="right"></i></div>
  </div>

  <footer class="status">
    <output class="coords">2703.4815, 1977.5526, 0.0000</output>
    <div class="toggles">
      <button aria-label="Inferir"><svg><use href="#s1"/></svg></button><button aria-label="Forzcursor"><svg><use href="#s2"/></svg></button><button class="on" aria-label="Rejilla"><svg><use href="#s3"/></svg></button><button aria-label="Orto"><svg><use href="#s4"/></svg></button><button aria-label="Polar"><svg><use href="#s5"/></svg></button><button class="on" aria-label="Refent"><svg><use href="#s6"/></svg></button><button aria-label="Refent 3D"><svg><use href="#s7"/></svg></button><button class="on" aria-label="Rastreo"><svg><use href="#s8"/></svg></button><button class="on" aria-label="SCP dinámico"><svg><use href="#s9"/></svg></button><button class="on" aria-label="Entrada dinámica"><svg><use href="#s10"/></svg></button><button aria-label="Grosor"><svg><use href="#s11"/></svg></button><button class="on" aria-label="Transparencia"><svg><use href="#s12"/></svg></button><button aria-label="Propiedades rápidas"><svg><use href="#s13"/></svg></button><button aria-label="Ciclo de selección"><svg><use href="#s14"/></svg></button><button aria-label="Monitor"><svg><use href="#s15"/></svg></button>
    </div>
    <div class="right-tools">
      <button class="txt">MODELO</button>
      <button aria-label="Presentación"><svg><use href="#model"/></svg></button>
      <button aria-label="Vistas"><svg><use href="#views"/></svg></button>
      <i class="sep"></i>
      <button class="txt scale"><svg><use href="#anno"/></svg>1:1<i class="caret"></i></button>
      <button aria-label="Visibilidad"><svg><use href="#annov"/></svg></button>
      <button aria-label="Escala automática"><svg><use href="#anno"/></svg></button>
      <i class="sep"></i>
      <button aria-label="Espacio de trabajo"><svg><use href="#gear"/></svg></button>
      <button aria-label="Bloquear"><svg><use href="#lock"/></svg></button>
      <button aria-label="Hardware"><svg><use href="#hw"/></svg></button>
      <button class="hi" aria-label="Aislar"><svg><use href="#iso"/></svg></button>
      <button class="hi" aria-label="Luz"><svg><use href="#bulb"/></svg></button>
      <button class="tiny" aria-label="Menú"><i class="caret"></i></button>
      <button aria-label="Limpiar pantalla"><svg><use href="#clean"/></svg></button>
    </div>
  </footer>
</div>
</body>
</html>
```
FILE: styles.css
```css
* { box-sizing: border-box; }
body { margin: 0; font: 8px/10px "Open Sans", "Noto Sans", sans-serif; color: #3c3d40; background: #55585e; }
button, select, input { font: inherit; color: inherit; margin: 0; padding: 0; border: 0; background: none; }
a { color: inherit; text-decoration: none; }
svg { display: block; flex: none; }
.defs { position: absolute; width: 0; height: 0; }
.app { display: flex; flex-direction: column; height: 100vh; min-height: 400px; }

/* arrows */
.caret, .up, .left, .right, .dot { display: block; flex: none; width: 0; height: 0; border: 3px solid transparent; }
.caret { border-top: 3px solid #3a3b3d; border-bottom: 0; }
.caret.s { border-width: 2px 2px 0; }
.up { border-bottom: 3px solid #222; border-top: 0; }
.right { border-width: 3px 0 3px 3px; border-left-color: #333; }
.left { border-width: 3px 3px 3px 0; border-right-color: #333; }
.dot { border-width: 2px 2px 0; border-top-color: #a5a8ac; }
.bar.left { box-shadow: -1px 0 #333; }
.bar.right { box-shadow: 1px 0 #333; }

/* title bar and tabs */
.top { display: grid; grid-template: 15px 12px / 30px minmax(0, 1fr); background: #3a3a3e; flex: none; }
.appbtn { grid-row: 1 / 3; margin: 1px 2px 2px; background: linear-gradient(#9ea2a7, #5a5d62); border: 1px solid #26282b; }
.appbtn svg { width: 100%; height: 100%; }
.titlebar { display: flex; align-items: center; background: linear-gradient(#8b8e93, #5b5d62); height: 15px; }
.titlebar button svg { width: 11px; height: 11px; }
.qat { display: flex; align-items: center; justify-content: space-between; width: 161px; padding: 0 4px 0 5px; }
.combo { display: flex; align-items: center; min-width: 0; border: 1px solid #c6c9cd; background: linear-gradient(#fff, #eceded); padding: 0 2px; }
.combo select { flex: 1; min-width: 0; appearance: none; outline: 0; height: 11px; line-height: 11px; }
.ico { width: 12px; height: 12px; }
.workspace { width: 124px; height: 12px; background: linear-gradient(#d8d9db, #b9bbbe); border-color: #8d9095; color: #1e1f21; }
.more { width: 11px; height: 13px; background: #74777c; border: 1px solid #4c4e52; display: flex; align-items: center; justify-content: center; }
.more .caret { border-top-color: #111; }
.more .right { border-left-color: #111; }
.doc { flex: 1; height: 15px; display: flex; align-items: center; justify-content: center; gap: 8px; background: linear-gradient(90deg, #2b6fc4, #5a8bcb 30%, #6d95cc 50%, #3c7ccc 75%, #2a6cc0); color: #101d33; white-space: nowrap; }
.side { width: 9px; }
.search { width: 124px; height: 12px; margin-left: 2px; background: #f1f1f2; font-style: italic; padding: 0 2px; }
.search::placeholder { color: #74767a; opacity: 1; }
.info { display: flex; align-items: center; gap: 4px; width: 177px; padding: 0 5px 0 4px; color: #e2e3e5; }
.signin { display: flex; align-items: center; gap: 4px; color: #d6d8da; white-space: nowrap; }
.grow { flex: 1; }
.winctl { width: 84px; height: 15px; display: flex; align-items: center; justify-content: space-between; padding: 0 13px 2px 15px; color: #fff; background: linear-gradient(90deg, #1f5fae, #2b70c2 60%, #1c559f); }
.winctl button:last-child { margin-left: 12px; }
.tabs { display: flex; align-items: stretch; color: #dddee0; white-space: nowrap; padding-left: 2px; }
.tabs a { padding: 1px 6px 0 7px; line-height: 10px; }
.tabs .on { background: linear-gradient(#f7f7f8, #e2e3e5); color: #2e2f31; margin-right: 1px; }
.mini { display: flex; align-items: center; gap: 5px; margin-left: 14px; }
.pillicon { width: 10px; height: 6px; border-radius: 2px; background: #77797d; border: 2px solid #e6e6e6; }

/* ribbon */
.ribbon { flex: none; display: grid; grid-template-columns: 168fr 166fr 149fr 65fr 61fr 113fr 48fr 57fr 58fr; padding: 0 5px 5px 2px; background: linear-gradient(#7e8188, #6a6e75); }
.panel { min-width: 0; display: flex; flex-direction: column; background: #fcfcfc; border-right: 1px solid #b4b7bc; }
.body { display: grid; height: 47px; padding: 2px 2px 2px 1px; }
.foot { display: flex; align-items: center; justify-content: center; gap: 5px; height: 11px; background: linear-gradient(#f0f1f2, #d9dbde); color: #46484b; position: relative; white-space: nowrap; line-height: 10px; }
.launch { position: absolute; right: 2px; font-style: normal; font-size: 7px; }
.big { display: flex; flex-direction: column; align-items: center; min-width: 0; white-space: nowrap; line-height: 10px; padding-top: 1px; }
.big svg { width: 24px; height: 21px; margin-bottom: 1px; }
.big .caret { margin-top: 2px; }
.glyph { font: bold 24px/22px Lato, sans-serif; height: 22px; color: #333538; }
.stack { display: grid; grid-template-rows: repeat(3, 14px); row-gap: 0; min-width: 0; }
.row { display: flex; align-items: center; gap: 4px; white-space: nowrap; }
.row svg { width: 12px; height: 12px; }
.split { display: flex; align-items: center; justify-content: space-around; border: 1px solid #d8dadd; background: #f6f7f8; height: 13px; padding: 0 1px; }
.split svg { width: 11px; height: 11px; }
.split.one { width: 17px; }
.split.sel { background: #a9c6ea; border-color: #3d6fb0; }
.draw { grid-template-columns: 28fr 34fr 44fr 30fr 4fr 25fr; padding-left: 0; }
.draw .stack { grid-column: 6; }
.modify { grid-template-columns: 57fr 53fr 24fr 17fr; column-gap: 3px; padding-left: 4px; }
.layers { grid-template-rows: 14px 14px 14px; }
.layers .combo { height: 13px; }
.iconrow { display: flex; justify-content: space-between; padding: 0 1px; }
.iconrow .split { width: 17px; }
.lay { gap: 3px; }
.swatch { flex: none; width: 11px; height: 10px; border: 1px solid #222; background: #fff; }
.annot { grid-template-columns: 36fr 23fr; }
.block { grid-template-columns: 31fr 26fr; }
.props { grid-template-columns: 12px minmax(0, 1fr); grid-auto-rows: 14px; column-gap: 3px; }
.props .combo { height: 13px; gap: 2px; padding-left: 0; }
.props .ico { width: 12px; height: 12px; margin: 0 1px; }
.rule { flex: 1; height: 1px; background: #333; margin-left: 3px; }
.props .rule + select { flex: none; width: 36px; }
.group { grid-template-columns: 28fr 16fr; padding-left: 2px; }
.util { grid-template-columns: 36fr 16fr; padding-right: 3px; }

/* drawing area */
.work { flex: 1; min-height: 0; display: flex; background: #1e2630; border-left: 2px solid #7b7f85; }
.canvas { position: relative; flex: 1; min-width: 0; overflow: hidden; }
.drawing { width: 100%; height: 100%; }
.compass text { font: bold 12px "Open Sans", sans-serif; fill: #c6cacf; text-anchor: middle; }
.face { font: bold 7px "Open Sans", sans-serif; fill: #4a4c50; text-anchor: middle; }
.wcs { font: 6px "Open Sans", sans-serif; fill: #6a6f76; text-anchor: middle; }
.vplabel { position: absolute; left: 3px; top: 3px; color: #d3d6d9; }
.docctl { position: absolute; right: 5px; top: 3px; display: flex; gap: 4px; color: #e8e9ea; }
.docctl svg { width: 10px; height: 10px; }
.cmd { position: absolute; left: 20.200%; right: 18.900%; bottom: 0; font-family: "Liberation Mono", monospace; }
.hist { display: flex; flex-direction: column; align-items: flex-start; gap: 1px; padding: 0 0 0 39px; line-height: 9px; color: #d5d7d9; }
.hist span { background: #5b6067; padding: 0 1px; height: 9px; }
.cmdline { display: flex; align-items: center; height: 15px; background: #abb0b8; padding-right: 3px; }
.grip { width: 37px; height: 15px; background: linear-gradient(90deg, #50545a, #6b6f75); margin-right: 4px; }
.grip svg { width: 37px; height: 14px; }
.prompt svg { width: 18px; height: 10px; }
.cmdline input { flex: 1; min-width: 0; height: 13px; margin-left: 3px; font-style: italic; outline: 0; }
.cmdline input::placeholder { color: #797f88; opacity: 1; }
.vscroll { width: 14px; flex: none; background: #eeeff0; border-left: 1px solid #cfd1d3; display: flex; flex-direction: column; align-items: center; justify-content: space-between; padding: 4px 0; }
.thumb { display: block; width: 11px; height: 10px; border: 1px solid #9a9da1; border-radius: 1px; background: linear-gradient(#fff, #cfd1d4); }

/* layout tabs */
.layouts { flex: none; display: flex; align-items: center; height: 11px; background: #f3f4f4; font-family: "Liberation Sans", sans-serif; color: #17181a; white-space: nowrap; }
.pager { display: flex; width: 44px; padding: 0 2px; justify-content: space-between; }
.pager button { width: 10px; height: 11px; display: flex; align-items: center; justify-content: center; }
.layouts a { height: 11px; line-height: 12px; padding: 0 1px; }
.layouts .on { background: #1e2630; color: #c9cdd1; padding: 0 7px; margin-right: 2px; clip-path: polygon(0 0, 100% 0, calc(100% - 4px) 100%, 4px 100%); }
.slash { width: 7px; height: 11px; background: linear-gradient(to bottom right, transparent 44%, #666 45%, #666 55%, transparent 56%); }
.hscroll { margin-left: auto; width: 34.300%; padding: 0 18px 0 4px; border-left: 1px solid #b9bbbe; display: flex; align-items: center; justify-content: space-between; }

/* status bar */
.status { flex: none; display: flex; align-items: center; height: 14px; background: linear-gradient(#a6a7a9, #808184); font-family: "Liberation Sans", sans-serif; color: #17181a; border-top: 1px solid #6e7074; }
.coords { width: 119px; padding-left: 8px; white-space: nowrap; }
.toggles, .right-tools { display: flex; align-items: center; }
.toggles button, .right-tools button { width: 15px; height: 12px; display: flex; align-items: center; justify-content: center; background: #bdbec0; border: 1px solid #8b8d90; }
.toggles { flex: none; width: 232px; }
.toggles button { flex: 1; }
.status svg { width: 11px; height: 10px; }
.toggles .on { background: #bfe3ea; }
.right-tools { margin-left: auto; }
.right-tools .txt { width: 37px; }
.right-tools .scale { width: 36px; gap: 2px; }
.sep { width: 8px; height: 12px; background: #77797c; }
.right-tools .hi { background: #a9b59c; }
.right-tools .tiny { width: 10px; margin-left: 3px; }
```
